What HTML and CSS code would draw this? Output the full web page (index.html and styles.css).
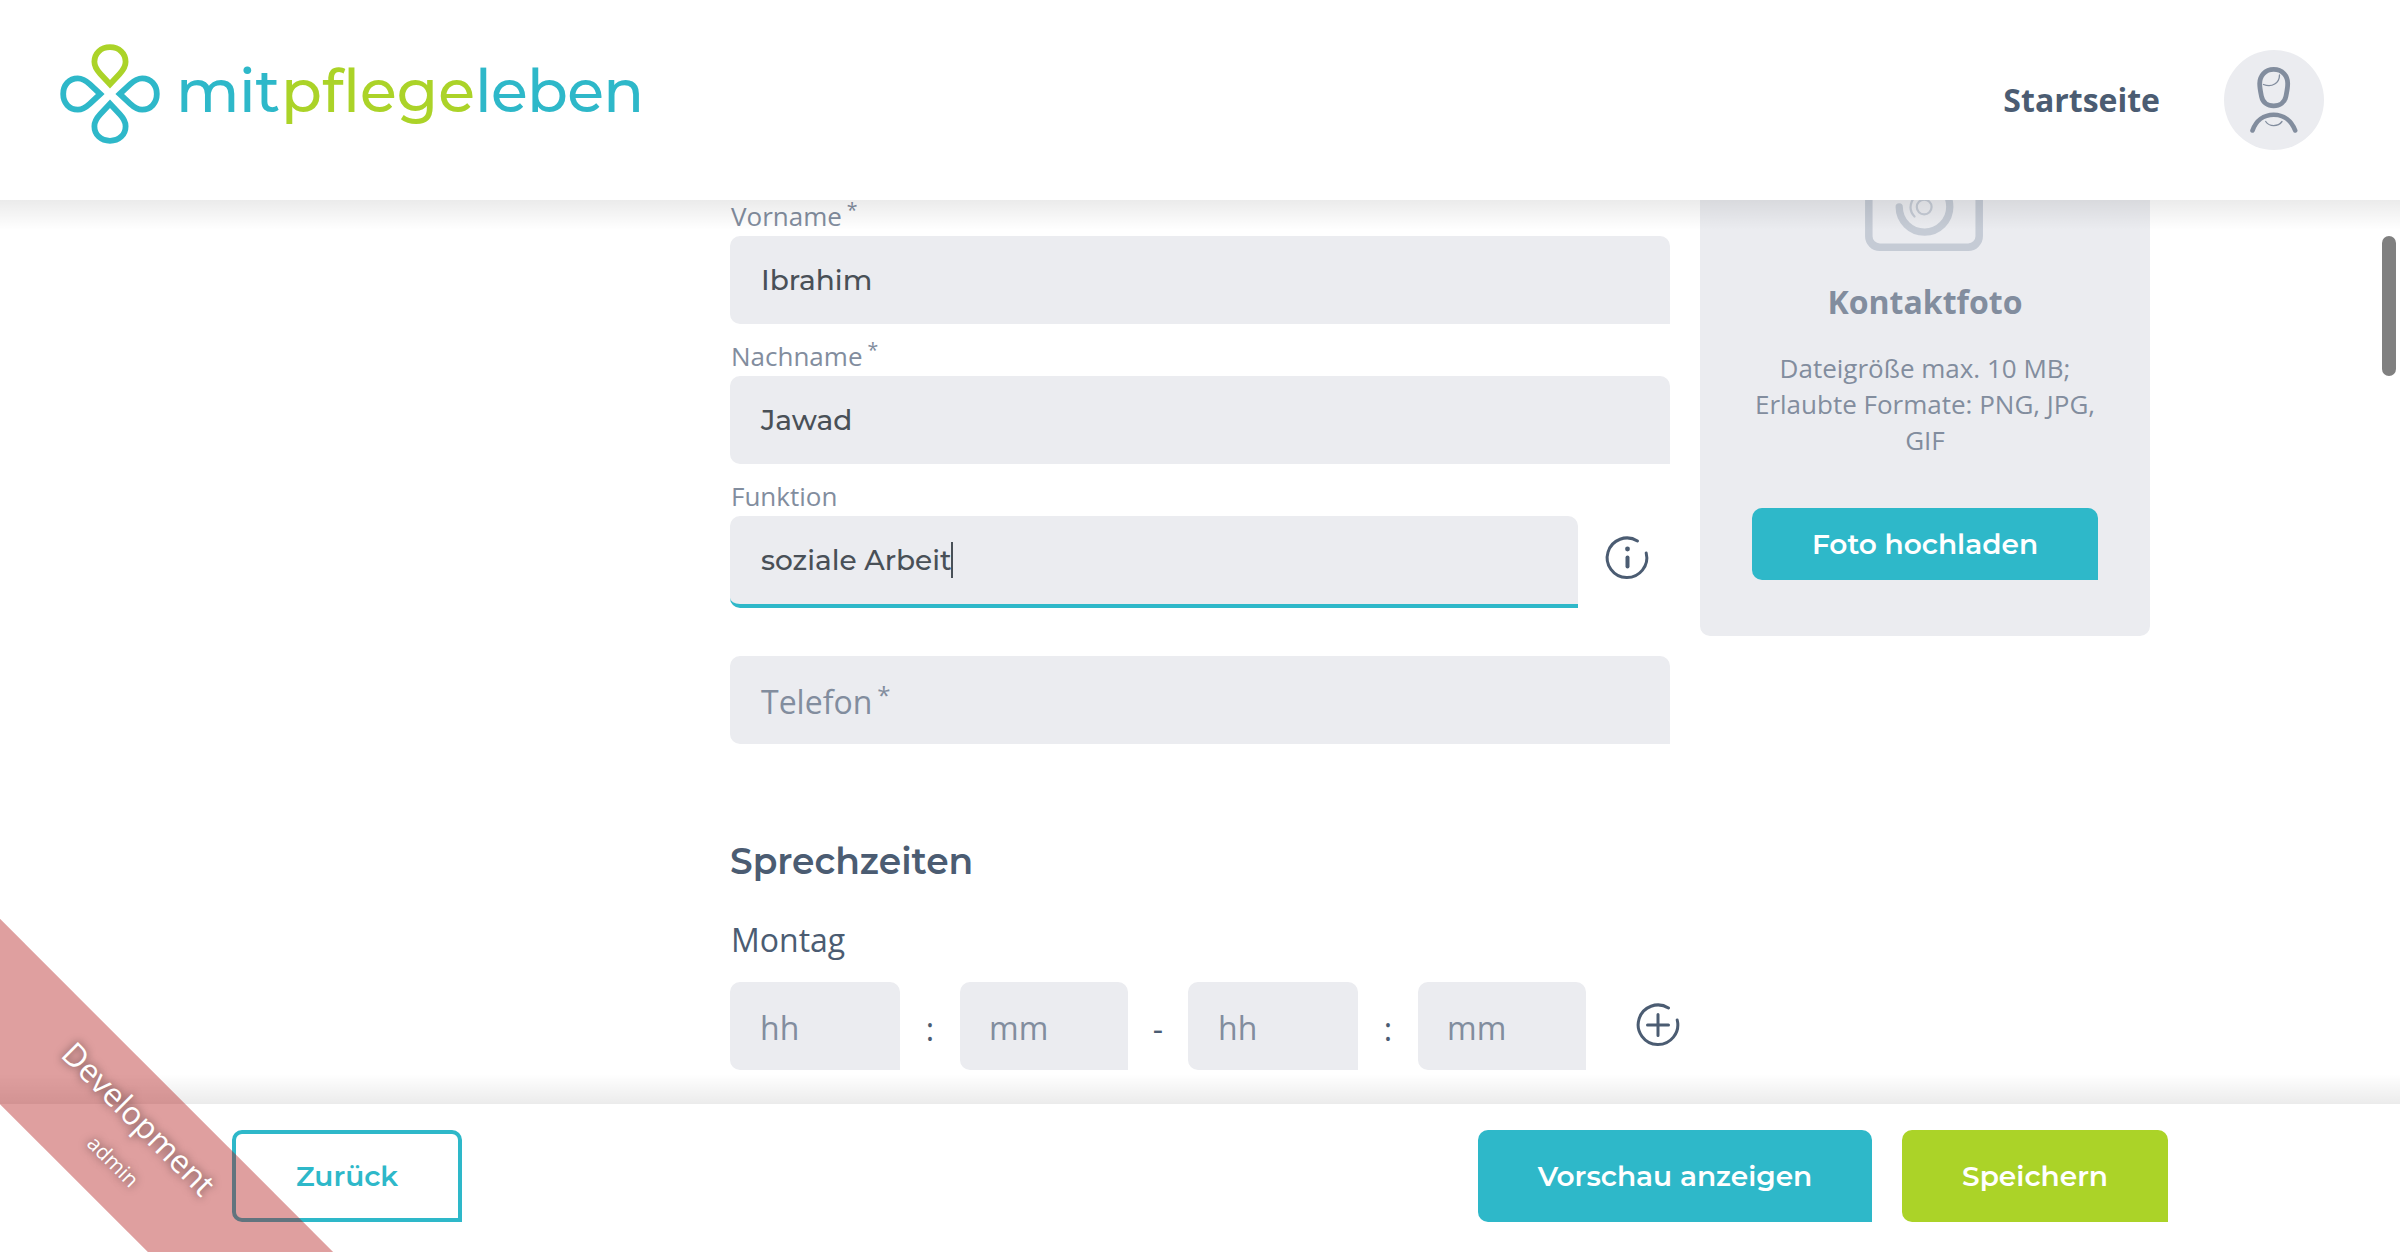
FILE: index.html
```html
<!DOCTYPE html>
<html lang="de">
<head>
<meta charset="utf-8">
<title>mitpflegeleben</title>
<link rel="stylesheet" href="styles.css">
</head>
<body>
<header class="header">
  <a class="brand">
    <svg class="brand-mark" width="100" height="100" viewBox="-50 -50 100 100" fill="none" stroke="#2eb8c9" stroke-width="5.8">
      <defs><path id="petal" d="M0-9.7L-9.8-20.3C-13.8-24.6-15.6-28-15.6-32.2C-15.6-40.8-9-46.8 0-46.8S15.6-40.8 15.6-32.2C15.6-28 13.8-24.6 9.8-20.3Z"/></defs>
      <use href="#petal" stroke="#abd328"/>
      <use href="#petal" transform="rotate(90)"/>
      <use href="#petal" transform="rotate(180)"/>
      <use href="#petal" transform="rotate(270)"/>
    </svg>
    <svg class="brand-name" width="470" height="80" viewBox="0 0 470 80">
      <text y="55" fill="#2eb8c9"><tspan x="-4" textLength="104">mit</tspan><tspan x="101" textLength="194" fill="#abd328">pflege</tspan><tspan x="295" textLength="169">leben</tspan></text>
    </svg>
  </a>
  <nav class="nav">
    <a class="nav-link">Startseite</a>
    <span class="avatar">
      <svg width="100" height="100" viewBox="0 0 100 100" fill="none" stroke="#828d9e" stroke-linecap="round">
        <path stroke-width="4.800" d="M49.700 19.400C41 19.400 35.700 26 35.700 33.500C35.700 38 36.500 41.500 37.500 46.500C38.800 52.500 43.500 55.900 49.700 55.900S60.600 52.500 61.900 46.500C62.900 41.500 63.700 38 63.700 33.500C63.700 26 58.400 19.400 49.700 19.400Z"/>
        <path stroke-width="4.600" d="M28.500 80.500C32 70.500 40 64.700 49.700 64.700S67.400 70.500 71.200 80.500"/>
        <path stroke-width="1.300" d="M39.500 34.500C48 38 55.500 33 55.500 25M41.700 71.500C45.500 77 54 77 58 71.500"/>
      </svg>
    </span>
  </nav>
</header>

<main class="content">
  <form class="form">
    <div class="field">
      <label class="label">Vorname<span class="star">*</span></label>
      <div class="input">Ibrahim</div>
    </div>
    <div class="field">
      <label class="label">Nachname<span class="star">*</span></label>
      <div class="input">Jawad</div>
    </div>
    <div class="field">
      <label class="label">Funktion</label>
      <div class="with-info">
        <div class="input focused">soziale Arbeit<span class="caret"></span></div>
        <svg class="icon" width="48" height="48" viewBox="-24 -24 48 48" fill="none" stroke="#4b5c72" stroke-width="3" stroke-linecap="round">
          <path d="M10.500-17A19.800 19.800 0 1 0 19.200-5"/>
          <path stroke-width="4" d="M.5-.5V8.500"/>
          <circle cx=".5" cy="-9" r="2.400" fill="#4b5c72" stroke="none"/>
        </svg>
      </div>
    </div>
    <div class="input placeholder phone">Telefon<span class="star">*</span></div>
    <h2 class="heading">Sprechzeiten</h2>
    <p class="day">Montag</p>
    <div class="times">
      <div class="input placeholder hour">hh</div><span class="sep">:</span>
      <div class="input placeholder minute">mm</div><span class="sep">-</span>
      <div class="input placeholder hour">hh</div><span class="sep">:</span>
      <div class="input placeholder minute">mm</div>
      <svg class="icon add" width="48" height="48" viewBox="-24 -24 48 48" fill="none" stroke="#4b5c72" stroke-width="3" stroke-linecap="round">
        <path d="M10.500-17A19.800 19.800 0 1 0 19.200-5"/>
        <path d="M-10.500 0H10.500M0-10.500V10.500"/>
      </svg>
    </div>
  </form>
  <aside class="photo-card">
    <svg class="camera" width="120" height="112" viewBox="0 0 120 112" fill="none" stroke="#c5cbd5" stroke-linecap="round">
      <path stroke-width="7.500" d="M15 18H33L40 5H80L87 18H103A11 11 0 0 1 114.200 29V96A11 11 0 0 1 103 107.200H15A11 11 0 0 1 3.800 96V29A11 11 0 0 1 15 18Z"/>
      <path stroke-width="7.300" d="M34.200 67A25.300 25.300 0 1 0 59.500 41.500"/>
      <circle cx="59.200" cy="67" r="7.400" stroke-width="2.200"/>
      <path stroke-width="2.200" d="M49.500 76.500A13.800 13.800 0 0 1 59.500 53.200"/>
    </svg>
    <h3 class="photo-title">Kontaktfoto</h3>
    <p class="photo-hint">Dateigröße max. 10 MB; Erlaubte Formate: PNG, JPG, GIF</p>
    <button class="btn upload" type="button">Foto hochladen</button>
  </aside>
  <span class="scrollbar"></span>
</main>

<footer class="footer">
  <button class="btn outline" type="button">Zurück</button>
  <button class="btn preview" type="button">Vorschau anzeigen</button>
  <button class="btn save" type="button">Speichern</button>
</footer>

<div class="ribbon-corner">
  <div class="ribbon"><span class="ribbon-env">Development</span><span class="ribbon-user">admin</span></div>
</div>
</body>
</html>
```
FILE: styles.css
```css
* { box-sizing: border-box; }

body {
  position: relative;
  display: flex;
  flex-direction: column;
  height: 1252px;
  margin: 0;
  overflow: hidden;
  background: #fff;
  color: #4b5c72;
  font-family: "Open Sans", sans-serif;
  font-size: 32px;
}

h2, h3, p { margin: 0; }

.header, .footer {
  position: relative;
  display: flex;
  flex: none;
  align-items: center;
  z-index: 1;
  background: #fff;
}

/* Soft shadow over the scrolling content */
.header::after, .footer::before {
  content: "";
  position: absolute;
  left: 0;
  right: 0;
  height: 30px;
}
.header::after {
  top: 100%;
  background: linear-gradient(rgba(0, 0, 0, .08), rgba(0, 0, 0, 0));
}
.footer::before {
  bottom: 100%;
  background: linear-gradient(rgba(0, 0, 0, 0), rgba(0, 0, 0, .08));
}

.header {
  justify-content: space-between;
  height: 200px;
  padding: 0 76px 0 60px;
}

.brand { display: flex; align-items: center; gap: 20px; margin-bottom: 13px; }
.brand-name {
  overflow: visible;
  margin-top: 6px;
  font-family: Montserrat, Inter, sans-serif;
  font-size: 60px;
  font-weight: 500;
}

.nav { display: flex; align-items: center; gap: 64px; }
.nav-link { margin-top: -2px; font-weight: 700; }
.avatar { display: flex; border-radius: 50%; background: #ebecf0; }

.content {
  position: relative;
  display: flex;
  flex: 1;
  gap: 30px;
  align-items: flex-start;
  min-height: 0;
  padding-left: 730px;
  overflow: hidden;
}

.form { width: 940px; margin-top: -16px; }

.label {
  display: block;
  height: 52px;
  padding: 16px 0 0 1px;
  color: #828d9e;
  font-size: 26px;
  line-height: 32px;
}

.star {
  margin-left: 5px;
  font-size: .75em;
  line-height: 0;
  vertical-align: 9px;
}

.input {
  display: flex;
  flex: none;
  align-items: center;
  height: 88px;
  padding: 0 31px;
  border-radius: 10px 10px 0 10px;
  background: #ebecf0;
  color: #495057;
  font: 500 28px/36px Montserrat, Inter, sans-serif;
}

.with-info { display: flex; align-items: flex-start; gap: 25px; }
.with-info .icon { margin-top: 18px; }
.focused { width: 848px; height: 92px; border-bottom: 4px solid #2eb8c9; }
.caret { width: 2px; height: 36px; margin-left: -1px; background: #495057; }

.placeholder {
  padding: 4px 0 0 31px;
  color: #828d9e;
  font: 400 32px/44px "Open Sans", sans-serif;
}
.phone { margin-top: 48px; }
.phone .star { margin-bottom: 15px; }

.heading {
  margin-top: 92px;
  font: 600 36px/50px Montserrat, Inter, sans-serif;
}
.day { margin: 32px 0 20px; padding-left: 1px; line-height: 44px; }

.times { display: flex; align-items: center; }
.hour { width: 170px; padding-left: 30px; }
.minute { width: 168px; padding-left: 29px; }
.sep { flex: none; width: 60px; padding-top: 4px; text-align: center; }
.icon { flex: none; }
.add { margin: -2px 0 0 48px; }

.photo-card {
  display: flex;
  flex-direction: column;
  align-items: center;
  width: 450px;
  height: 510px;
  margin-top: -74px;
  padding-top: 14px;
  border-radius: 10px;
  background: #ebecf0;
  color: #828d9e;
  text-align: center;
}
.photo-title { margin-top: 28px; font-size: 32px; line-height: 44px; }
.photo-hint { width: 346px; margin: 26px 0 50px; font-size: 26px; line-height: 36px; }

.btn {
  height: 92px;
  padding: 0;
  border: 0;
  border-radius: 10px 10px 0 10px;
  background: #2eb8c9;
  color: #fff;
  font: 600 28px/36px Montserrat, Inter, sans-serif;
}
.upload { width: 346px; height: 72px; }

.scrollbar {
  position: absolute;
  top: 36px;
  right: 4px;
  width: 14px;
  height: 140px;
  border-radius: 7px;
  background: #808080;
}

.footer { height: 148px; padding: 0 232px 4px; }
.outline {
  width: 230px;
  margin-right: auto;
  border: 4px solid #2eb8c9;
  background: #fff;
  color: #2eb8c9;
}
.preview { width: 394px; }
.save { width: 266px; margin-left: 30px; background: #abd328; }

.ribbon-corner {
  position: absolute;
  z-index: 2;
  left: 0;
  bottom: 0;
  width: 400px;
  height: 400px;
  overflow: hidden;
  pointer-events: none;
}
.ribbon {
  position: absolute;
  left: -277px;
  top: 217px;
  display: flex;
  flex-direction: column;
  align-items: center;
  width: 800px;
  height: 131px;
  padding-top: 19px;
  transform: rotate(45deg);
  background: rgba(176, 16, 16, .4);
  color: #fff;
  text-shadow: 0 0 8px rgba(0, 0, 0, .6);
}
.ribbon-env { line-height: 48px; }
.ribbon-user { margin-left: 24px; font-size: 21px; line-height: 49px; }
```
